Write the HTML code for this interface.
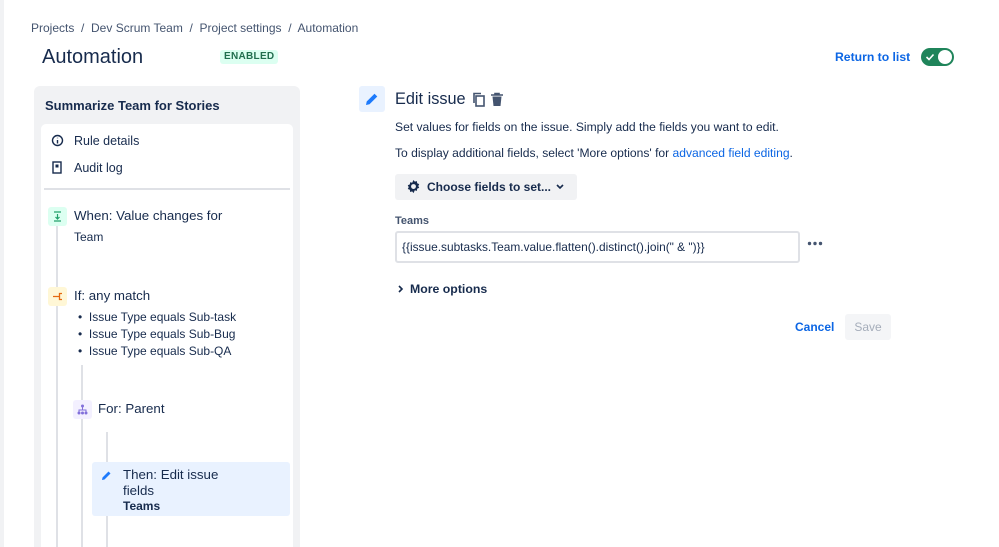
<!DOCTYPE html>
<html><head><meta charset="utf-8"><style>
*{box-sizing:border-box;margin:0;padding:0}
html,body{width:999px;height:547px;overflow:hidden}
body{background:#fff;font-family:"Liberation Sans",sans-serif;color:#172b4d;position:relative}
.a{position:absolute}
.t13{font-size:12.1px}
.lnk{color:#0c66e4}
</style></head><body>
<div class="a" style="left:0;top:0;width:4px;height:547px;background:#f1f2f4"></div>
<div class="a" style="left:31px;top:21px;color:#44546f;font-size:12px">Projects &nbsp;/&nbsp; Dev Scrum Team &nbsp;/&nbsp; Project settings &nbsp;/&nbsp; Automation</div>
<div class="a" style="left:42px;top:46px;font-size:20px;color:#172b4d">Automation</div>
<div class="a" style="left:220px;top:50px;height:14px;padding:0 4px;background:#dcfff1;color:#216e4e;font-size:10px;font-weight:bold;line-height:14px;border-radius:3px;letter-spacing:.3px">ENABLED</div>
<div class="a lnk" style="left:835px;top:50px;font-weight:bold;font-size:12.2px">Return to list</div>
<div class="a" style="left:921px;top:48px;width:33px;height:18px;background:#1f845a;border-radius:9px">
<svg class="a" style="left:4px;top:4px" width="10" height="10" viewBox="0 0 10 10"><path d="M1.5 5l2.5 2.5 4.5-5" stroke="#fff" stroke-width="1.6" fill="none"/></svg>
<div class="a" style="left:17px;top:2px;width:14px;height:14px;border-radius:50%;background:#fff"></div></div>

<div class="a" style="left:34px;top:86px;width:266px;height:470px;background:#f1f2f4;border-radius:6px"></div>
<div class="a" style="left:45px;top:98px;font-size:13px;font-weight:bold">Summarize Team for Stories</div>
<div class="a" style="left:41px;top:124px;width:252px;height:430px;background:#fff;border-radius:5px"></div>
<svg class="a" style="left:51px;top:134px" width="13" height="13" viewBox="0 0 13 13"><circle cx="6.5" cy="6.5" r="5" stroke="#172b4d" stroke-width="1.4" fill="none"/><path d="M6.5 6v3.5M6.5 3.8v.4" stroke="#172b4d" stroke-width="1.4"/></svg>
<div class="a" style="left:74px;top:134px;font-size:12.5px">Rule details</div>
<svg class="a" style="left:52px;top:161px" width="11" height="13" viewBox="0 0 11 13"><rect x="1" y="1" width="8" height="11" stroke="#172b4d" stroke-width="1.4" fill="none"/><path d="M3.5 3.5h3v3h-3z" fill="#172b4d"/></svg>
<div class="a" style="left:74px;top:161px;font-size:12.5px">Audit log</div>
<div class="a" style="left:44px;top:188px;width:246px;height:2px;background:#dfe1e6"></div>

<div class="a" style="left:56px;top:225px;width:2px;height:330px;background:#dfe1e6"></div>
<div class="a" style="left:81px;top:365px;width:2px;height:190px;background:#dfe1e6"></div>
<div class="a" style="left:106px;top:432px;width:2px;height:125px;background:#dfe1e6"></div>

<div class="a" style="left:48px;top:207px;width:19px;height:19px;background:#dcfff1;border-radius:3px"><svg class="a" style="left:5px;top:4px" width="9" height="11" viewBox="0 0 9 11"><path d="M1 1h7M4.5 3v5M2.5 6l2 2 2-2M1 10h7" stroke="#22a06b" stroke-width="1.2" fill="none"/></svg></div>
<div class="a" style="left:74px;top:208px;font-size:13.3px">When: Value changes for</div>
<div class="a" style="left:74px;top:230px;font-size:12px">Team</div>

<div class="a" style="left:48px;top:287px;width:19px;height:19px;background:#fff7d6;border-radius:3px"><svg class="a" style="left:4px;top:5px" width="12" height="9" viewBox="0 0 12 9"><path d="M1 4.5h4M10 1.5H7.5v6H10M5 4.5h2.5" stroke="#e56910" stroke-width="1.3" fill="none"/></svg></div>
<div class="a" style="left:74px;top:288px;font-size:13.3px">If: any match</div>
<div class="a" style="left:78px;top:309px;font-size:12px;line-height:17px">•&nbsp; Issue Type equals Sub-task<br>•&nbsp; Issue Type equals Sub-Bug<br>•&nbsp; Issue Type equals Sub-QA</div>

<div class="a" style="left:73px;top:400px;width:19px;height:19px;background:#f3f0ff;border-radius:3px"><svg class="a" style="left:4px;top:4px" width="11" height="11" viewBox="0 0 11 11"><circle cx="5.5" cy="2" r="1.5" fill="#8270db"/><circle cx="2" cy="9" r="1.5" fill="#8270db"/><circle cx="5.5" cy="9" r="1.5" fill="#8270db"/><circle cx="9" cy="9" r="1.5" fill="#8270db"/><path d="M5.5 3v3M2 8V6h7v2" stroke="#8270db" stroke-width="1" fill="none"/></svg></div>
<div class="a" style="left:98px;top:401px;font-size:13.3px">For: Parent</div>

<div class="a" style="left:92px;top:462px;width:198px;height:54px;background:#e9f2ff;border-radius:3px"></div>
<svg class="a" style="left:101px;top:470px" width="11" height="11" viewBox="0 0 11 11"><path d="M1 10l.5-2.5L7.5 1.5l2 2-6 6z" fill="#1d7afc"/></svg>
<div class="a" style="left:123px;top:467px;font-size:13.3px;line-height:16px">Then: Edit issue<br>fields</div>
<div class="a" style="left:123px;top:499px;font-size:12px;font-weight:bold">Teams</div>

<div class="a" style="left:359px;top:86px;width:26px;height:26px;background:#e9f2ff;border-radius:3px"><svg class="a" style="left:6px;top:6px" width="14" height="14" viewBox="0 0 14 14"><path d="M1 13l.7-3.5L9.5 1.7l2.8 2.8-7.8 7.8z" fill="#1d7afc"/></svg></div>
<div class="a" style="left:395px;top:90px;font-size:16.3px">Edit issue</div>
<svg class="a" style="left:472px;top:92px" width="14" height="15" viewBox="0 0 14 15"><rect x="4" y="4" width="8" height="10" stroke="#44546f" stroke-width="1.6" fill="none"/><path d="M2 11V1.5h7" stroke="#44546f" stroke-width="1.6" fill="none"/></svg>
<svg class="a" style="left:490px;top:92px" width="14" height="15" viewBox="0 0 14 15"><path d="M1 3h12M5 3V1.5h4V3" stroke="#44546f" stroke-width="1.6" fill="none"/><path d="M2.5 4.5h9l-1 9.5h-7z" fill="#44546f"/></svg>
<div class="a t13" style="left:395px;top:120px">Set values for fields on the issue. Simply add the fields you want to edit.</div>
<div class="a t13" style="left:395px;top:146px">To display additional fields, select 'More options' for <span class="lnk">advanced field editing</span>.</div>
<div class="a" style="left:395px;top:174px;width:182px;height:26px;background:#f1f2f4;border-radius:3px"></div>
<svg class="a" style="left:406px;top:179px" width="15" height="15" viewBox="0 0 16 16"><path d="M8 1l1.4 1.8 2.2-.6.3 2.3 2.2.9-1 2 1 2-2.2.9-.3 2.3-2.2-.6L8 15l-1.4-1.8-2.2.6-.3-2.3-2.2-.9 1-2-1-2 2.2-.9.3-2.3 2.2.6z" fill="#172b4d"/><circle cx="8" cy="8" r="2.6" fill="#f1f2f4"/></svg>
<div class="a" style="left:427px;top:180px;font-weight:bold;font-size:12px;color:#172b4d">Choose fields to set...</div>
<svg class="a" style="left:556px;top:184px" width="8" height="6" viewBox="0 0 8 6"><path d="M1 1l3 3 3-3" stroke="#172b4d" stroke-width="1.6" fill="none"/></svg>
<div class="a" style="left:395px;top:215px;font-size:11px;font-weight:bold;color:#44546f">Teams</div>
<div class="a" style="left:395px;top:231px;width:405px;height:32px;border:2px solid #dfe1e6;border-radius:3px;padding:7px 0 0 5px;font-size:11.9px">{{issue.subtasks.Team.value.flatten().distinct().join(" &amp; ")}}</div>
<svg class="a" style="left:807px;top:241px" width="16" height="5" viewBox="0 0 16 5"><circle cx="2.5" cy="2.5" r="1.7" fill="#44546f"/><circle cx="8" cy="2.5" r="1.7" fill="#44546f"/><circle cx="13.5" cy="2.5" r="1.7" fill="#44546f"/></svg>
<svg class="a" style="left:398px;top:285px" width="6" height="8" viewBox="0 0 6 8"><path d="M1 1l3 3-3 3" stroke="#172b4d" stroke-width="1.6" fill="none"/></svg>
<div class="a" style="left:410px;top:282px;font-weight:bold;font-size:12.3px">More options</div>
<div class="a lnk" style="left:795px;top:320px;font-weight:bold;font-size:12px">Cancel</div>
<div class="a" style="left:845px;top:314px;width:46px;height:26px;background:#f4f5f7;border-radius:3px;color:#a5adba;font-size:12px;text-align:center;line-height:26px">Save</div>
</body></html>
